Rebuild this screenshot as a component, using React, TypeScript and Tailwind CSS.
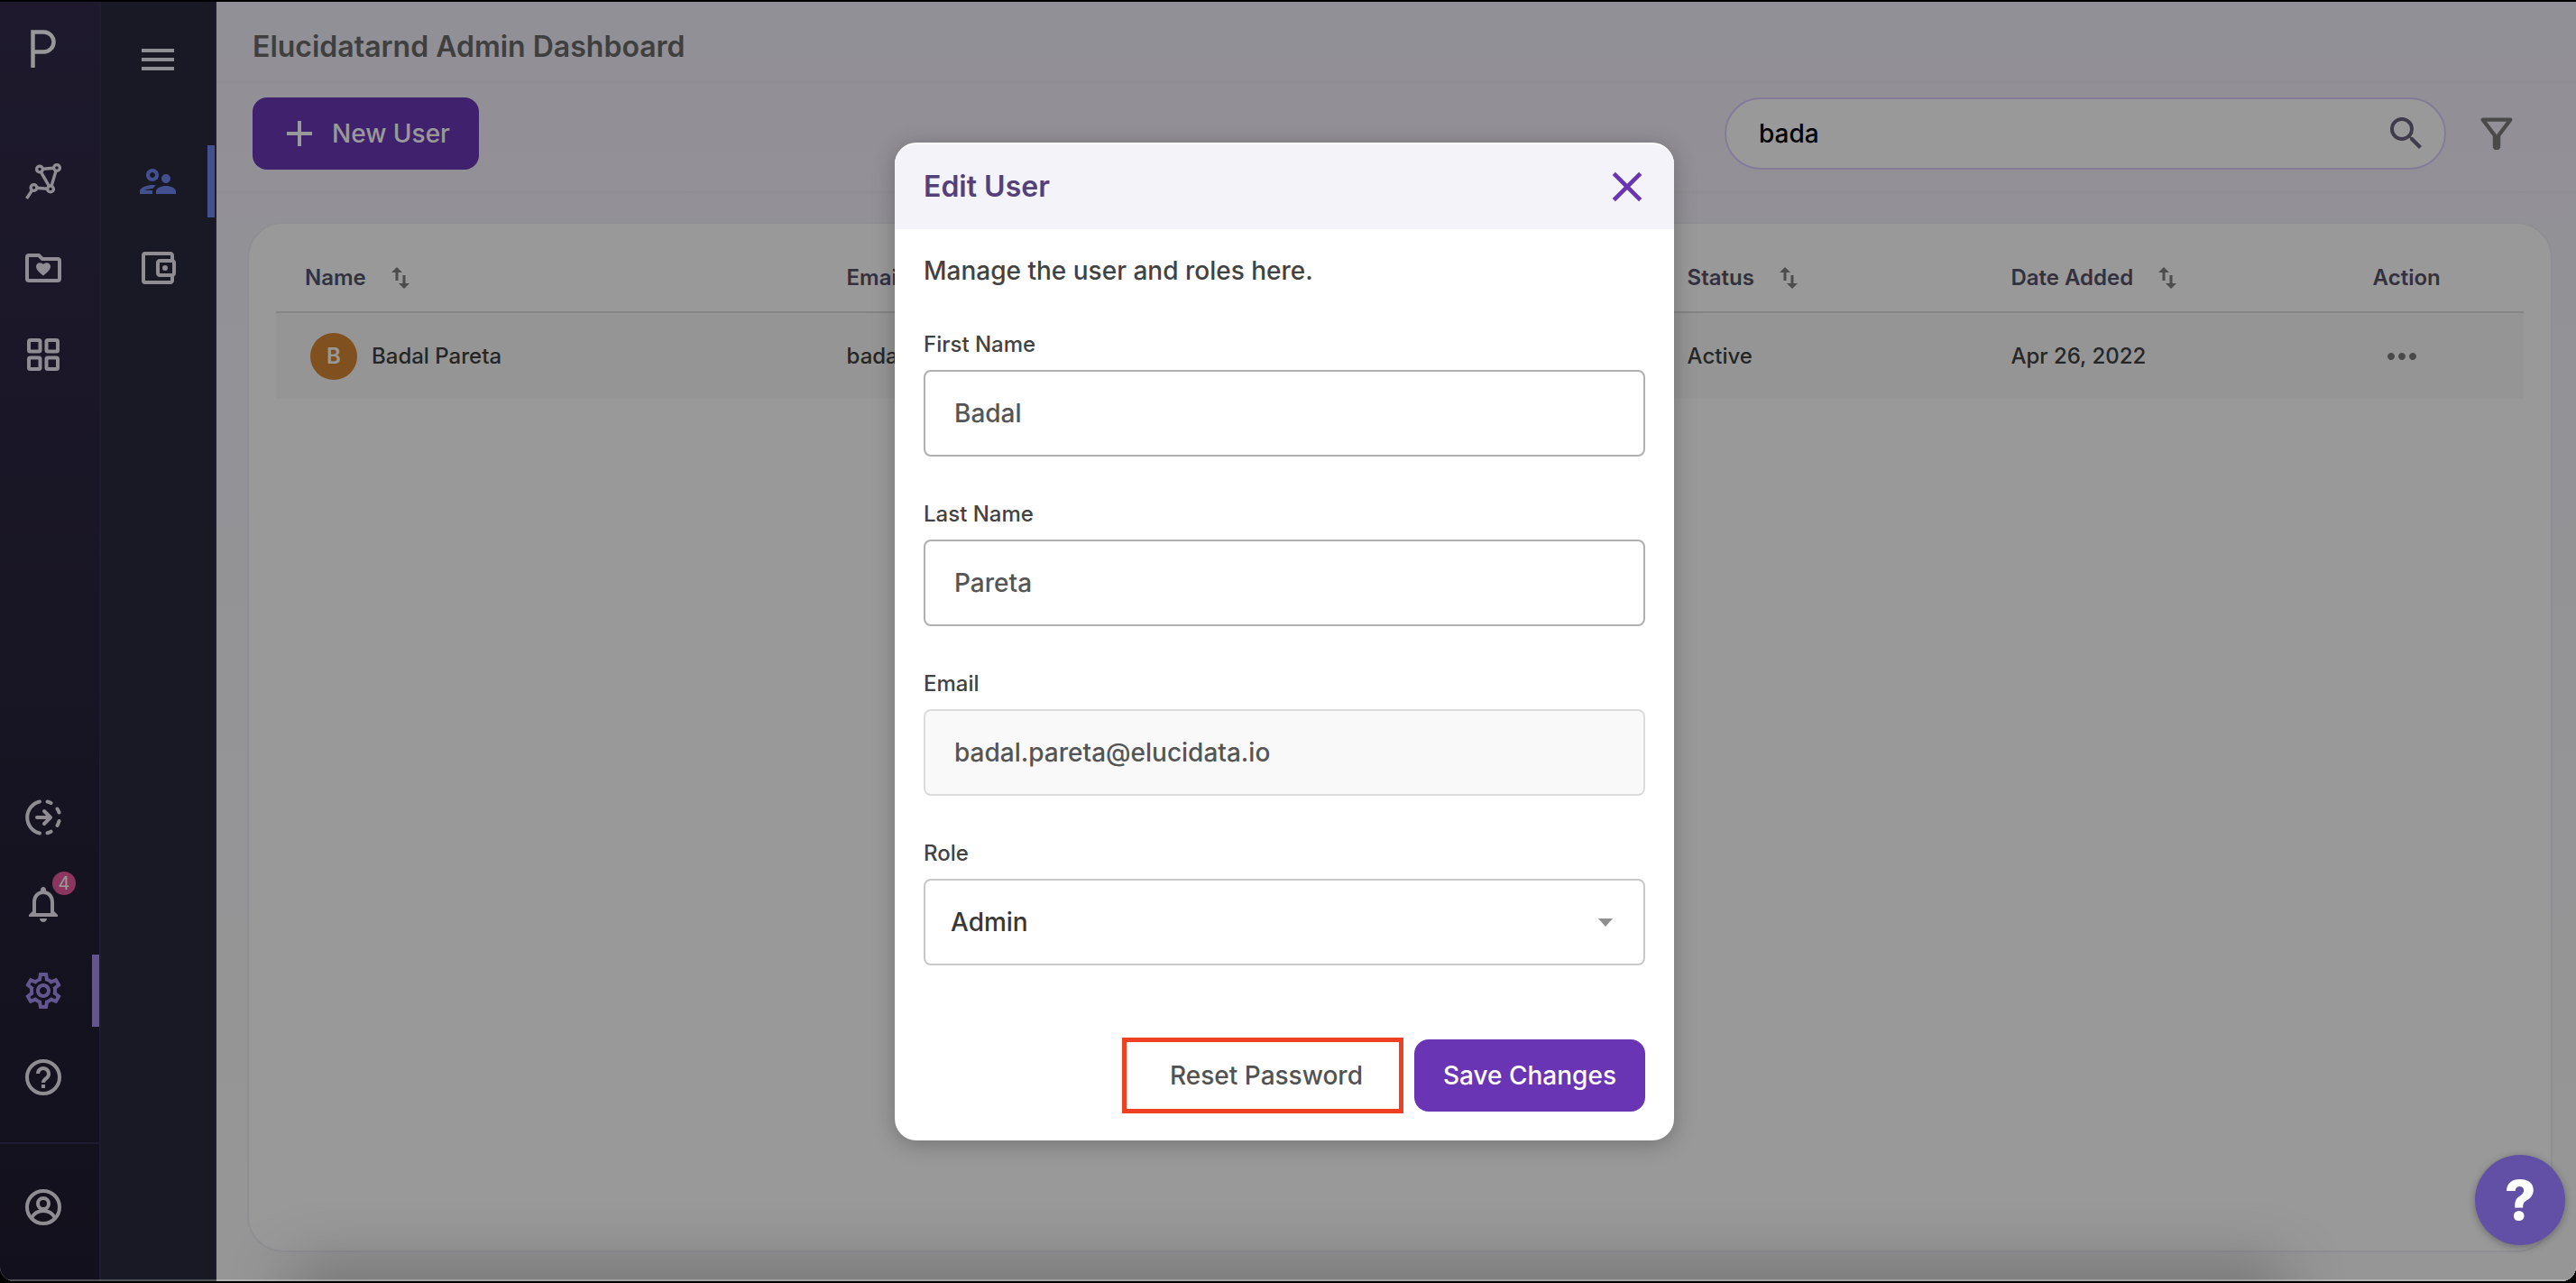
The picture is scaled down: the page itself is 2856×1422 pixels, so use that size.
import { useState } from "react";
import type { ReactNode } from "react";
import {
  MdAdd,
  MdClose,
  MdMenu,
  MdMoreHoriz,
  MdOutlineAccountBalanceWallet,
  MdOutlineNotifications,
  MdOutlineSettings,
  MdOutlineSupervisorAccount,
  MdSearch,
} from "react-icons/md";
import clsx from "clsx";

const LogoIcon = () => (
  <svg viewBox="0 0 28 42" className="h-[42px] w-7" fill="none" stroke="currentColor" strokeWidth="4.5">
    <path d="M2.5 42V2.5H14.5a11 11 0 0 1 0 22H2.5" />
  </svg>
);

const GraphIcon = () => (
  <svg viewBox="0 0 40 40" className="size-10 overflow-visible" fill="none" stroke="currentColor" strokeWidth="3.4">
    <circle cx="16" cy="6.5" r="3.4" />
    <circle cx="35" cy="5" r="3.4" />
    <circle cx="28" cy="28.5" r="3.4" />
    <circle cx="9.5" cy="27" r="3.4" />
    <path d="M19.5 6.2 31.5 5.3M17.5 9.8l9 15.5M34 8.5l-5 16.8M13 27.3l11.5 1M7.5 30 1.5 39" />
  </svg>
);

const FolderHeartIcon = () => (
  <svg viewBox="0 0 40 32" className="h-8 w-10" fill="none">
    <path
      d="M4 2h11l4 4h17a2 2 0 0 1 2 2v20a2 2 0 0 1-2 2H4a2 2 0 0 1-2-2V4a2 2 0 0 1 2-2Z"
      stroke="currentColor"
      strokeWidth="4"
    />
    <path
      d="M20 24.5c-3-2.5-8-6.3-8-10 0-2.5 1.800-4.300 4.200-4.300 1.500 0 2.900.7 3.800 1.900.9-1.200 2.300-1.900 3.800-1.900 2.400 0 4.200 1.800 4.200 4.300 0 3.700-5 7.500-8 10Z"
      fill="currentColor"
    />
  </svg>
);

const GridIcon = () => (
  <svg viewBox="0 0 36 36" className="size-9" fill="none" stroke="currentColor" strokeWidth="4">
    <rect x="2" y="2" width="12.5" height="12.5" rx="1.5" />
    <rect x="21.5" y="2" width="12.5" height="12.5" rx="1.5" />
    <rect x="2" y="21.5" width="12.5" height="12.5" rx="1.5" />
    <rect x="21.5" y="21.5" width="12.5" height="12.5" rx="1.5" />
  </svg>
);

const TransferIcon = () => (
  <svg
    viewBox="0 0 40 40"
    className="size-10"
    fill="none"
    stroke="currentColor"
    strokeWidth="4"
    strokeLinecap="round"
    strokeLinejoin="round"
  >
    <path d="M16 2.5a18 18 0 0 0 0 35" />
    <path d="M24.5 2.5a18 18 0 0 1 4 1.600M35.500 10.500a18 18 0 0 1 2 4M37.500 24a18 18 0 0 1-2 5M28.500 35.700a18 18 0 0 1-4 1.600" />
    <path d="M13 20h15M21 13l7 7-7 7" />
  </svg>
);

const HelpIcon = () => (
  <svg viewBox="0 0 40 40" className="size-10" fill="none" stroke="currentColor" strokeWidth="4">
    <circle cx="20" cy="20" r="18" />
    <path d="M14 16a6 6 0 1 1 10 4.5c-2.400 2-4 3-4 5.500M18 30h4" />
  </svg>
);

const ProfileIcon = () => (
  <svg viewBox="0 0 40 40" className="size-10" fill="none" stroke="currentColor" strokeWidth="4">
    <circle cx="20" cy="20" r="18" />
    <circle cx="20" cy="16" r="6" />
    <path d="M7 32c2.500-5 7.500-8 13-8s10.500 3 13 8" />
  </svg>
);

const FilterIcon = () => (
  <svg viewBox="0 0 34 34" className="size-9" fill="none" stroke="currentColor" strokeWidth="4" strokeLinejoin="round">
    <path d="M2.5 2.5h29L19 19v11.5a1.500 1.500 0 0 1-4 0V19Z" />
  </svg>
);

const SortIcon = () => (
  <svg viewBox="0 0 20 24" className="h-6 w-5" fill="currentColor">
    <path d="M0 6 6 0l6 6H7.500v9h-3V6ZM8 18l6 6 6-6h-4.500V9h-3v9Z" />
  </svg>
);

const RailItem = ({
  label,
  active,
  accent = "purple",
  children,
}: {
  label: string;
  active?: boolean;
  accent?: "purple" | "blue";
  children: ReactNode;
}) => (
  <a
    href="#"
    aria-label={label}
    className={clsx(
      "flex h-20 w-full items-center justify-center border-r-8 border-transparent",
      accent === "purple" ? "pr-1.5" : "pl-2",
      !active && "text-[#eeeaf6]",
      active && accent === "purple" && "border-r-[#a68fef] text-[#a68fef]",
      active && accent === "blue" && "border-r-[#7085ee] text-[#7085ee]"
    )}
  >
    {children}
  </a>
);

const columns = [
  { name: "Name", sortable: true, width: "w-[24.1%]" },
  { name: "Email", sortable: true, width: "w-[37.4%]" },
  { name: "Status", sortable: true, width: "w-[14.4%]" },
  { name: "Date Added", sortable: true, width: "w-[16.1%]" },
  { name: "Action", sortable: false, width: "w-[8%]" },
];

const Field = ({
  id,
  label,
  children,
}: {
  id: string;
  label: string;
  children: ReactNode;
}) => (
  <div className="mb-11 flex flex-col">
    <label htmlFor={id} className="mb-2 text-2xl/10 font-medium text-[#424242]">
      {label}
    </label>
    {children}
  </div>
);

const inputClass = "h-24 rounded-lg border-2 px-8 text-[28px] font-medium text-[#555]";

const EditUserDialog = () => {
  const [firstName, setFirstName] = useState("Badal");
  const [lastName, setLastName] = useState("Pareta");
  const [role, setRole] = useState("Admin");

  return (
    <div
      role="dialog"
      aria-labelledby="dialog-title"
      className="w-[864px] overflow-hidden rounded-3xl border-t-2 border-white bg-white shadow-[0_4px_24px_rgba(0,0,0,0.25)]"
    >
      <div className="flex h-[94px] items-center justify-between bg-[#f5f3fa] pl-8 pr-6">
        <h2 id="dialog-title" className="text-[32px] font-semibold text-[#55417a]">
          Edit User
        </h2>
        <button aria-label="Close" className="text-[#6935b5]">
          <MdClose className="size-14" />
        </button>
      </div>
      <form className="px-8 pb-8 pt-6">
        <p className="mb-10 text-[28px]/11 font-medium text-[#424242]">Manage the user and roles here.</p>
        <Field id="first-name" label="First Name">
          <input
            id="first-name"
            value={firstName}
            onChange={(e) => setFirstName(e.target.value)}
            className={clsx(inputClass, "border-[#b0b0b0]")}
          />
        </Field>
        <Field id="last-name" label="Last Name">
          <input
            id="last-name"
            value={lastName}
            onChange={(e) => setLastName(e.target.value)}
            className={clsx(inputClass, "border-[#b0b0b0]")}
          />
        </Field>
        <Field id="email" label="Email">
          <input
            id="email"
            disabled
            value="badal.pareta@elucidata.io"
            className={clsx(inputClass, "border-[#dcdcdc] bg-[#f9f9f9]")}
          />
        </Field>
        <Field id="role" label="Role">
          <div className="relative">
            <select
              id="role"
              value={role}
              onChange={(e) => setRole(e.target.value)}
              className="h-24 w-full appearance-none rounded-lg border-2 border-[#c8c8c8] bg-white px-7 text-[28px] font-medium text-[#383838]"
            >
              <option>Admin</option>
              <option>Member</option>
            </select>
            <svg
              viewBox="0 0 16 9"
              className="pointer-events-none absolute right-9 top-11 h-[9px] w-4 fill-[#8f8f8f]"
            >
              <path d="M0 0h16L8 9Z" />
            </svg>
          </div>
        </Field>
        <div className="mt-[82px] flex h-20 items-center justify-end gap-3">
          <button
            type="button"
            className="h-[84px] shrink-0 border-[5px] border-[#ee4123] pl-12 pr-10 text-[28px] font-medium text-[#525252]"
          >
            Reset Password
          </button>
          <button type="button" className="h-20 rounded-2xl bg-[#6935b5] px-8 text-[28px] font-medium text-white">
            Save Changes
          </button>
        </div>
      </form>
    </div>
  );
};

const App = () => {
  const [query, setQuery] = useState("bada");

  return (
    <div className="h-screen min-h-[1300px] bg-black py-0.5 font-['Inter',sans-serif]">
      <div className="relative flex h-full overflow-hidden rounded-b-2xl bg-white">
        <nav className="flex w-28 shrink-0 flex-col border-r-2 border-[#352f50] bg-linear-to-b from-[#322b4b] to-[#1f1c2f]">
          <a href="#" aria-label="Home" className="flex h-[103px] items-center justify-center pr-3.5 text-[#fdfdfd]">
            <LogoIcon />
          </a>
          <div className="mt-14 flex flex-col gap-4">
            <RailItem label="Discover"><GraphIcon /></RailItem>
            <RailItem label="Workspaces"><FolderHeartIcon /></RailItem>
            <RailItem label="Apps"><GridIcon /></RailItem>
          </div>
          <div className="mt-auto flex flex-col gap-4 pb-8">
            <RailItem label="Switch"><TransferIcon /></RailItem>
            <RailItem label="Notifications">
              <span className="relative">
                <MdOutlineNotifications className="size-12" />
                <span className="absolute -right-3 -top-3 flex size-[26px] items-center justify-center rounded-full bg-[#e65a9e] text-xl text-white">
                  4
                </span>
              </span>
            </RailItem>
            <RailItem label="Settings" active><MdOutlineSettings className="size-12" /></RailItem>
            <RailItem label="Help"><HelpIcon /></RailItem>
          </div>
          <div className="flex h-[154px] items-center border-t-2 border-[#352f50] pb-3">
            <RailItem label="Profile"><ProfileIcon /></RailItem>
          </div>
        </nav>

        <nav className="flex w-32 shrink-0 flex-col border-r-2 border-[#352f50] bg-[#2b283e]">
          <button aria-label="Menu" className="flex h-[127px] items-center justify-center text-[#ebeef6]">
            <MdMenu className="size-12" />
          </button>
          <div className="mt-8 flex flex-col gap-4">
            <RailItem label="Users" active accent="blue"><MdOutlineSupervisorAccount className="size-12" /></RailItem>
            <RailItem label="Billing" accent="blue"><MdOutlineAccountBalanceWallet className="size-12" /></RailItem>
          </div>
        </nav>

        <main className="flex min-w-0 grow flex-col bg-linear-to-b from-[#f2f0fa] to-[#fbfbfb]">
          <h1 className="flex h-[90px] items-center border-b-2 border-[#efedf6] pl-10 pt-3 text-[32px] font-semibold text-[#6a6a6a]">
            Elucidatarnd Admin Dashboard
          </h1>
          <div className="flex h-[122px] items-center border-b-2 border-[#efedf6] pb-2 pl-10 pr-14">
            <button className="flex h-20 items-center gap-3 rounded-2xl bg-[#6c37b7] pl-7 pr-8 text-[28px] font-medium text-white">
              <MdAdd className="size-12" />
              New User
            </button>
            <div className="relative ml-auto w-[800px]">
              <input
                type="text"
                aria-label="Search users"
                value={query}
                onChange={(e) => setQuery(e.target.value)}
                className="h-20 w-full rounded-full border-2 border-[#dccdff] bg-white pl-9 pr-20 text-[28px] font-medium text-black"
              />
              <MdSearch className="absolute right-5 top-4 size-12 text-[#6b6480]" />
            </div>
            <button aria-label="Filter" className="ml-6 flex size-16 items-center justify-center text-[#7c7c7c]">
              <FilterIcon />
            </button>
          </div>
          <section className="mb-8 ml-[34px] mr-[26px] mt-8 grow rounded-[40px] border-2 border-[#efedf6] bg-white px-[30px] pt-[22px]">
            <table className="w-full table-fixed text-left text-2xl text-[#404040]">
              <thead>
                <tr className="h-[76px] border-b-2 border-[#dcdcdc] text-[#58536a]">
                  {columns.map((col) => (
                    <th key={col.name} className={clsx("pl-8 font-semibold", col.width)}>
                      <span className="flex items-center gap-7">
                        {col.name}
                        {col.sortable && (
                          <button aria-label={`Sort by ${col.name}`} className="text-[#808080]">
                            <SortIcon />
                          </button>
                        )}
                      </span>
                    </th>
                  ))}
                </tr>
              </thead>
              <tbody>
                <tr className="h-24 bg-[#f9f9f9] font-medium">
                  <td className="pl-[38px]">
                    <span className="flex items-center gap-4">
                      <span className="flex size-[52px] items-center justify-center rounded-full bg-[#d58532] font-semibold text-white">
                        B
                      </span>
                      Badal Pareta
                    </span>
                  </td>
                  <td className="pl-8">badal.pareta@elucidata.io</td>
                  <td className="pl-8">Active</td>
                  <td className="pl-8">Apr 26, 2022</td>
                  <td className="pl-8">
                    <button aria-label="More actions" className="flex size-16 items-center justify-center text-[#7c7c7c]">
                      <MdMoreHoriz className="size-12" />
                    </button>
                  </td>
                </tr>
              </tbody>
            </table>
          </section>
        </main>

        <div className="absolute inset-0 flex items-center justify-center bg-black/40 pr-2">
          <EditUserDialog />
        </div>
        {/* soft shade along the window's lower edge */}
        <div className="pointer-events-none absolute inset-x-[340px] top-full h-10 shadow-[0_0_70px_16px_rgba(0,0,0,0.25)]" />
        <div className="pointer-events-none absolute inset-x-0 bottom-0 h-0.5 bg-white/25" />
        <button className="absolute bottom-10 right-3 size-[100px] rounded-full bg-[#6250a6] text-[60px]/[100px] font-extrabold text-white shadow-[0_2px_8px_rgba(0,0,0,0.3)]">
          ?
        </button>
      </div>
    </div>
  );
};

export default App;
